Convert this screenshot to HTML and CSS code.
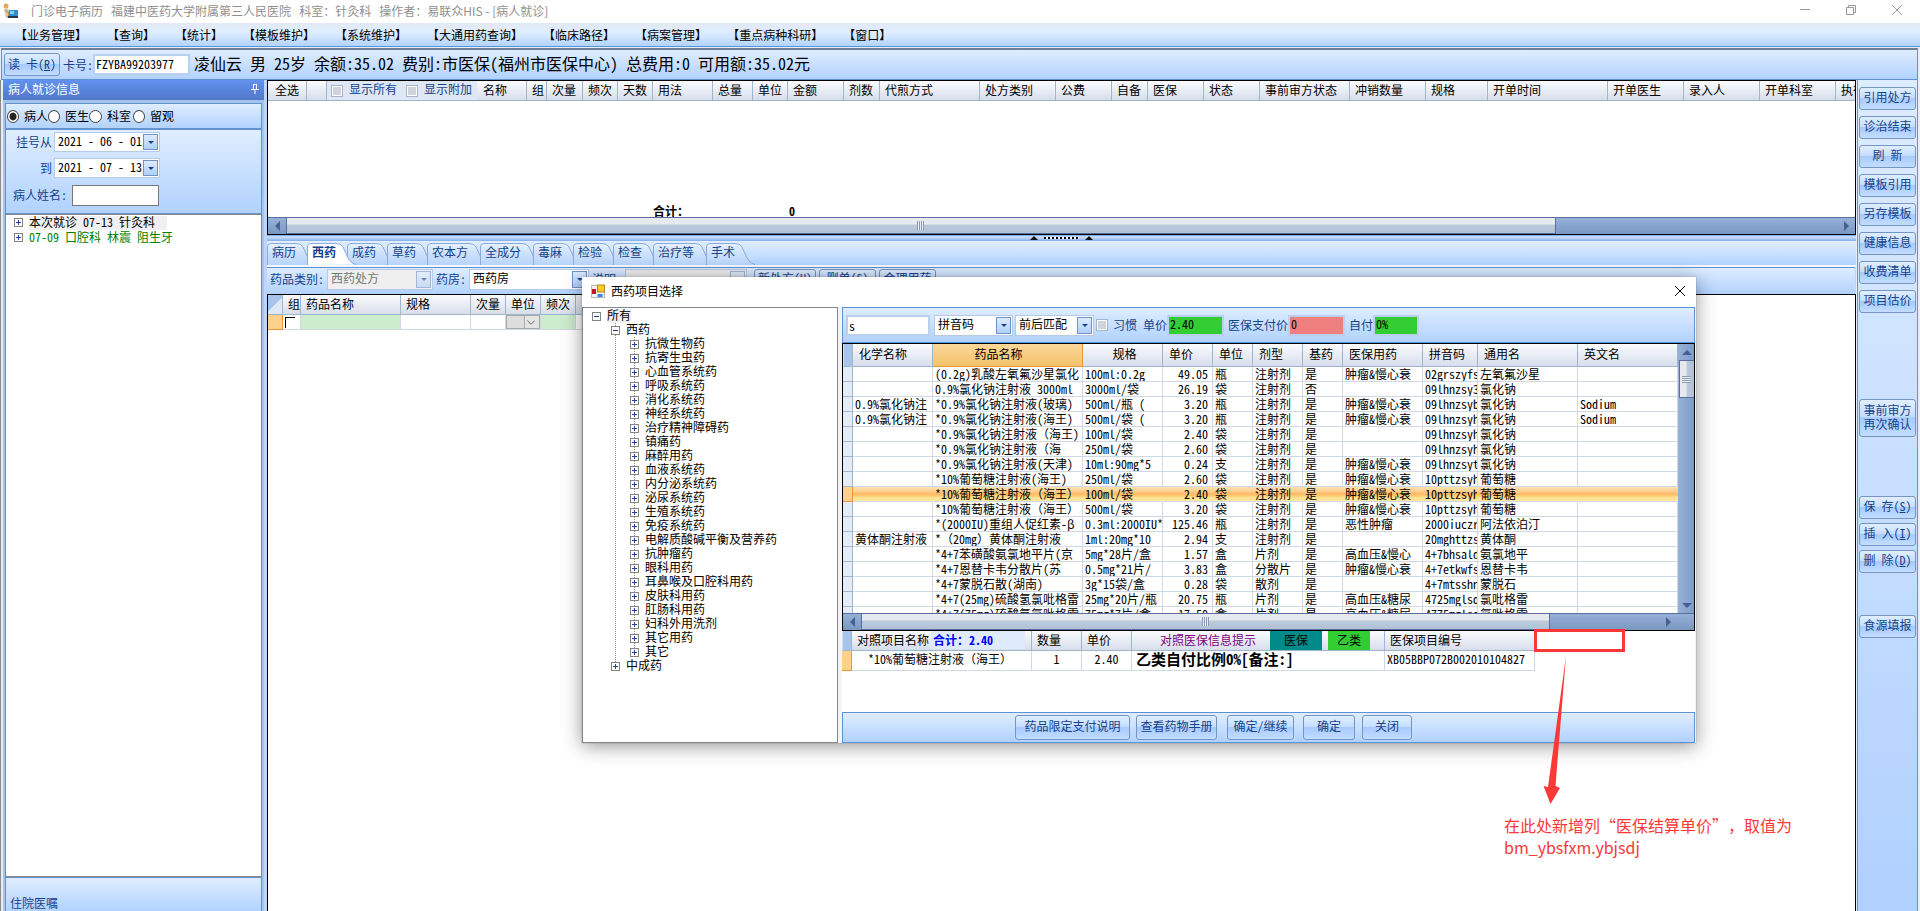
FILE: index.html
```html
<!DOCTYPE html>
<html lang="zh-CN">
<head>
<meta charset="utf-8">
<title>门诊电子病历</title>
<link rel="stylesheet" href="styles.css">
</head>
<body>
<svg class="defs" aria-hidden="true">
  <defs>
    <linearGradient id="tabfill" x1="0" y1="0" x2="0" y2="1"><stop offset="0" stop-color="#e6f1ff"/><stop offset="0.5" stop-color="#cbe0fb"/><stop offset="1" stop-color="#b9d5fb"/></linearGradient>
  </defs>
  <symbol id="tab2" viewBox="0 0 50 23"><path d="M.5 23V5Q.5 1.500 4 1.500H29Q34 1.500 36 5L41 16Q44 22 49 22.500"/></symbol>
  <symbol id="tab3" viewBox="0 0 63 23"><path d="M.5 23V5Q.5 1.500 4 1.500H42Q47 1.500 49 5L54 16Q57 22 62 22.500"/></symbol>
</svg>
<header class="titlebar">
  <svg class="app-icon" viewBox="0 0 16 16"><circle cx="4" cy="3" r="2.500" fill="#e8a95c"/><path d="M2 6q3-2 5 1l2 4-2 4H4z" fill="#d8c7a8"/><path d="M3 7l4 3-1 4" fill="none" stroke="#b98446"/><rect x="7" y="7" width="9" height="6" fill="#2d8fd0"/><rect x="8" y="8" width="4" height="3" fill="#7ed3f0"/><path d="M6 13h10v2H6z" fill="#26374f"/></svg>
  <h1>门诊电子病历&nbsp;&nbsp; 福建中医药大学附属第三人民医院&nbsp;&nbsp; 科室：针灸科&nbsp;&nbsp; 操作者：易联众HIS - [病人就诊]</h1>
  <div class="win-controls">
    <button aria-label="最小化"><svg viewBox="0 0 12 12"><path d="M1 5.500h10"/></svg></button>
    <button aria-label="还原"><svg viewBox="0 0 12 12"><path d="M1.500 3.500h7v7h-7zM3.500 3V1.500h7v7H9"/></svg></button>
    <button aria-label="关闭"><svg viewBox="0 0 12 12"><path d="M1 1l10 10M11 1L1 11"/></svg></button>
  </div>
</header>
<nav class="menubar">
  <a href="#">【业务管理】</a><a href="#">【查询】</a><a href="#">【统计】</a><a href="#">【模板维护】</a><a href="#">【系统维护】</a><a href="#">【大通用药查询】</a><a href="#">【临床路径】</a><a href="#">【病案管理】</a><a href="#">【重点病种科研】</a><a href="#">【窗口】</a>
</nav>
<section class="patientbar">
  <button class="btn read">读 卡(<u>R</u>)</button>
  <label for="card">卡号:</label>
  <input id="card" class="box card" value="FZYBA99203977">
  <p class="patient">凌仙云 男 25岁 余额:35.02 费别:市医保(福州市医保中心) 总费用:0 可用额:35.02元</p>
</section>
<main class="workspace">
  <aside class="left">
    <h2 class="left-head">病人就诊信息<svg class="pin" viewBox="0 0 8 10"><path d="M2.500 0v5M5.500 0v5M2 .5h4M0 5.500h8M4 6v4"/></svg></h2>
    <form class="left-body">
      <div class="radios">
        <label><input type="radio" name="kind" checked>病人</label>
        <label><input type="radio" name="kind">医生</label>
        <label class="dept"><input type="radio" name="kind">科室</label>
        <label><input type="radio" name="kind">留观</label>
      </div>
      <div class="filters">
        <label for="d1">挂号从</label>
        <span class="combo"><input id="d1" value="2021 - 06 - 01"><button type="button" class="drop" aria-label="选择日期"></button></span>
        <label for="d2">到</label>
        <span class="combo"><input id="d2" value="2021 - 07 - 13"><button type="button" class="drop" aria-label="选择日期"></button></span>
        <label for="pname" class="wide">病人姓名:</label>
        <input id="pname" class="name">
      </div>
    </form>
    <ul class="tree visits">
      <li><div class="node"><i class="plus"></i><span class="sel">本次就诊 07-13 针灸科</span></div></li>
      <li class="done"><div class="node"><i class="plus"></i><span>07-09 口腔科 林震 阻生牙</span></div></li>
    </ul>
    <footer class="left-foot">住院医嘱</footer>
  </aside>
  <section class="center">
    <div class="orders">
      <div class="head-wrap">
      <table class="grid orders-table">
        <colgroup><col class="w39"><col class="w20"><col class="w200"><col class="w20"><col class="w36"><col class="w35"><col class="w35"><col class="w60"><col class="w40"><col class="w35"><col class="w56"><col class="w36"><col class="w100"><col class="w76"><col class="w56"><col class="w36"><col class="w56"><col class="w56"><col class="w90"><col class="w76"><col class="w62"><col class="w120"><col class="w76"><col class="w76"><col class="w76"><col class="w76"></colgroup>
        <thead><tr><th>全选</th><th></th><th class="checks"><div><label><input type="checkbox">显示所有</label><label><input type="checkbox">显示附加</label><span>名称</span></div></th><th>组</th><th>次量</th><th>频次</th><th>天数</th><th>用法</th><th>总量</th><th>单位</th><th>金额</th><th>剂数</th><th>代煎方式</th><th>处方类别</th><th>公费</th><th>自备</th><th>医保</th><th>状态</th><th>事前审方状态</th><th>冲销数量</th><th>规格</th><th>开单时间</th><th>开单医生</th><th>录入人</th><th>开单科室</th><th>执行</th></tr></thead>
      </table>
      </div>
      <div class="sum"><b class="fw">合计：</b><b>0</b></div>
      <div class="hscroll"><i class="arr left-arr"></i><i class="thumb top-thumb"></i><i class="arr right-arr"></i></div>
    </div>
    <div class="splitter"><i class="tri"></i><i class="dots"></i><i class="tri"></i></div>
    <div class="tabs">
      <button class="tab two"><svg><use href="#tab2"/></svg><span>病历</span></button>
      <button class="tab two active"><svg><use href="#tab2"/></svg><span>西药</span></button>
      <button class="tab two"><svg><use href="#tab2"/></svg><span>成药</span></button>
      <button class="tab two"><svg><use href="#tab2"/></svg><span>草药</span></button>
      <button class="tab three"><svg><use href="#tab3"/></svg><span>农本方</span></button>
      <button class="tab three"><svg><use href="#tab3"/></svg><span>全成分</span></button>
      <button class="tab two"><svg><use href="#tab2"/></svg><span>毒麻</span></button>
      <button class="tab two"><svg><use href="#tab2"/></svg><span>检验</span></button>
      <button class="tab two"><svg><use href="#tab2"/></svg><span>检查</span></button>
      <button class="tab three"><svg><use href="#tab3"/></svg><span>治疗等</span></button>
      <button class="tab two"><svg><use href="#tab2"/></svg><span>手术</span></button>
    </div>
    <div class="rxbar">
      <label for="cat">药品类别:</label>
      <span class="combo off"><select id="cat" disabled><option>西药处方</option></select><i class="drop"></i></span>
      <label for="store">药房:</label>
      <span class="combo store"><select id="store"><option>西药房</option></select><i class="drop"></i></span>
      <label for="note">说明</label>
      <span class="combo off note"><select id="note" disabled><option></option></select><i class="drop"></i></span>
      <button class="btn rx-btn">新处方(<u>U</u>)</button>
      <button class="btn rx-btn">删单(<u>S</u>)</button>
      <button class="btn rx-btn">合理用药</button>
    </div>
    <div class="rx">
      <table class="grid rx-table">
        <colgroup><col class="w15"><col class="w18"><col class="w100"><col class="w70"><col class="w35"><col class="w35"><col class="w35"><col class="w35"></colgroup>
        <thead><tr><th class="corner"></th><th>组</th><th>药品名称</th><th>规格</th><th>次量</th><th>单位</th><th>频次</th><th></th></tr></thead>
        <tbody><tr><td class="cur"></td><td><input type="checkbox" class="flat" aria-label="组"></td><td class="mint"></td><td></td><td></td><td class="unit"><span><svg viewBox="0 0 9 5"><path d="M.5.5l4 4 4-4"/></svg></span></td><td class="mint"></td><td></td></tr></tbody>
      </table>
    </div>
  </section>
  <aside class="right">
    <div class="group g1"><button class="btn">引用处方</button><button class="btn">诊治结束</button><button class="btn">刷 新</button><button class="btn">模板引用</button><button class="btn">另存模板</button><button class="btn">健康信息</button><button class="btn">收费清单</button><button class="btn">项目估价</button></div>
    <div class="group g2"><button class="btn tall">事前审方<br>再次确认</button></div>
    <div class="group g3"><button class="btn">保 存(<u>S</u>)</button><button class="btn">插 入(<u>I</u>)</button><button class="btn">删 除(<u>D</u>)</button></div>
    <div class="group g4"><button class="btn">食源填报</button></div>
  </aside>
</main>

<section class="dialog" role="dialog" aria-labelledby="dlg-title">
  <header class="dlg-head">
    <svg class="dlg-icon" viewBox="0 0 15 15"><rect x=".5" y="1.500" width="13" height="12" fill="#f2f2f2" stroke="#b9b9b9"/><rect x="1" y="5" width="4" height="5" fill="#c01c1c"/><rect x="6.500" y="1" width="7" height="7" fill="#f7c92c" stroke="#b98b10"/><rect x="6.500" y="10" width="5" height="3" fill="#3f87f0"/></svg>
    <h2 id="dlg-title">西药项目选择</h2>
    <button class="close" aria-label="关闭"><svg viewBox="0 0 12 12"><path d="M1 1l10 10M11 1L1 11"/></svg></button>
  </header>
  <div class="dlg-body">
    <div class="tree-pane">
      <ul class="tree">
        <li><div class="node"><i class="plus minus"></i><span class="sel">所有</span></div>
          <ul>
            <li><div class="node"><i class="plus minus"></i><span>西药</span></div>
              <ul>
                <li><div class="node"><i class="plus"></i><span>抗微生物药</span></div></li>
                <li><div class="node"><i class="plus"></i><span>抗寄生虫药</span></div></li>
                <li><div class="node"><i class="plus"></i><span>心血管系统药</span></div></li>
                <li><div class="node"><i class="plus"></i><span>呼吸系统药</span></div></li>
                <li><div class="node"><i class="plus"></i><span>消化系统药</span></div></li>
                <li><div class="node"><i class="plus"></i><span>神经系统药</span></div></li>
                <li><div class="node"><i class="plus"></i><span>治疗精神障碍药</span></div></li>
                <li><div class="node"><i class="plus"></i><span>镇痛药</span></div></li>
                <li><div class="node"><i class="plus"></i><span>麻醉用药</span></div></li>
                <li><div class="node"><i class="plus"></i><span>血液系统药</span></div></li>
                <li><div class="node"><i class="plus"></i><span>内分泌系统药</span></div></li>
                <li><div class="node"><i class="plus"></i><span>泌尿系统药</span></div></li>
                <li><div class="node"><i class="plus"></i><span>生殖系统药</span></div></li>
                <li><div class="node"><i class="plus"></i><span>免疫系统药</span></div></li>
                <li><div class="node"><i class="plus"></i><span>电解质酸碱平衡及营养药</span></div></li>
                <li><div class="node"><i class="plus"></i><span>抗肿瘤药</span></div></li>
                <li><div class="node"><i class="plus"></i><span>眼科用药</span></div></li>
                <li><div class="node"><i class="plus"></i><span>耳鼻喉及口腔科用药</span></div></li>
                <li><div class="node"><i class="plus"></i><span>皮肤科用药</span></div></li>
                <li><div class="node"><i class="plus"></i><span>肛肠科用药</span></div></li>
                <li><div class="node"><i class="plus"></i><span>妇科外用洗剂</span></div></li>
                <li><div class="node"><i class="plus"></i><span>其它用药</span></div></li>
                <li><div class="node"><i class="plus"></i><span>其它</span></div></li>
              </ul>
            </li>
            <li><div class="node"><i class="plus"></i><span>中成药</span></div></li>
          </ul>
        </li>
      </ul>
    </div>
    <div class="pick">
      <div class="search">
        <input class="box key" value="s" aria-label="检索">
        <span class="combo"><select aria-label="码"><option>拼音码</option></select><i class="drop"></i></span>
        <span class="combo"><select aria-label="匹配"><option>前后匹配</option></select><i class="drop"></i></span>
        <label class="habit"><input type="checkbox">习惯</label>
        <label for="p1">单价</label><input id="p1" class="box val green" value="2.40">
        <label for="p2" class="gap">医保支付价</label><input id="p2" class="box val pink" value="0">
        <label for="p3" class="gap">自付</label><input id="p3" class="box val green short" value="0%">
      </div>
      <div class="drugs">
        <div class="drugs-view">
        <table class="grid drug-table">
          <colgroup><col class="w10"><col class="w80"><col class="w150"><col class="w80"><col class="w50"><col class="w40"><col class="w50"><col class="w40"><col class="w80"><col class="w55"><col class="w100"><col class="w100"></colgroup>
          <thead><tr><th class="corner bar"></th><th>化学名称</th><th class="sorted">药品名称</th><th class="mid">规格</th><th>单价</th><th>单位</th><th>剂型</th><th>基药</th><th>医保用药</th><th>拼音码</th><th>通用名</th><th>英文名</th></tr></thead>
          <tbody>
          <tr><td></td><td></td><td>(0.2g)乳酸左氧氟沙星氯化</td><td>100ml:0.2g</td><td>49.05</td><td>瓶</td><td>注射剂</td><td>是</td><td>肿瘤&amp;慢心衰</td><td>02grszyfs</td><td>左氧氟沙星</td><td></td></tr>
          <tr><td></td><td></td><td>0.9%氯化钠注射液 3000ml</td><td>3000ml/袋</td><td>26.19</td><td>袋</td><td>注射剂</td><td>否</td><td></td><td>09lhnzsy3</td><td>氯化钠</td><td></td></tr>
          <tr><td></td><td>0.9%氯化钠注</td><td>*0.9%氯化钠注射液(玻璃)</td><td>500ml/瓶 (</td><td>3.20</td><td>瓶</td><td>注射剂</td><td>是</td><td>肿瘤&amp;慢心衰</td><td>09lhnzsyb</td><td>氯化钠</td><td>Sodium</td></tr>
          <tr><td></td><td>0.9%氯化钠注</td><td>*0.9%氯化钠注射液(海王)</td><td>500ml/袋 (</td><td>3.20</td><td>瓶</td><td>注射剂</td><td>是</td><td>肿瘤&amp;慢心衰</td><td>09lhnzsyh</td><td>氯化钠</td><td>Sodium</td></tr>
          <tr><td></td><td></td><td>*0.9%氯化钠注射液<span class="fw">（</span>海王)</td><td>100ml/袋</td><td>2.40</td><td>袋</td><td>注射剂</td><td>是</td><td></td><td>09lhnzsyh</td><td>氯化钠</td><td></td></tr>
          <tr><td></td><td></td><td>*0.9%氯化钠注射液<span class="fw">（</span>海</td><td>250ml/袋</td><td>2.60</td><td>袋</td><td>注射剂</td><td>是</td><td></td><td>09lhnzsyh</td><td>氯化钠</td><td></td></tr>
          <tr><td></td><td></td><td>*0.9%氯化钠注射液(天津)</td><td>10ml:90mg*5</td><td>0.24</td><td>支</td><td>注射剂</td><td>是</td><td>肿瘤&amp;慢心衰</td><td>09lhnzsyt</td><td>氯化钠</td><td></td></tr>
          <tr><td></td><td></td><td>*10%葡萄糖注射液(海王)</td><td>250ml/袋</td><td>2.60</td><td>袋</td><td>注射剂</td><td>是</td><td>肿瘤&amp;慢心衰</td><td>10pttzsyh</td><td>葡萄糖</td><td></td></tr>
          <tr class="picked"><td></td><td></td><td>*10%葡萄糖注射液<span class="fw">（海王）</span></td><td>100ml/袋</td><td>2.40</td><td>袋</td><td>注射剂</td><td>是</td><td>肿瘤&amp;慢心衰</td><td>10pttzsyh</td><td>葡萄糖</td><td></td></tr>
          <tr><td></td><td></td><td>*10%葡萄糖注射液<span class="fw">（海王）</span></td><td>500ml/袋</td><td>3.20</td><td>袋</td><td>注射剂</td><td>是</td><td>肿瘤&amp;慢心衰</td><td>10pttzsyh</td><td>葡萄糖</td><td></td></tr>
          <tr><td></td><td></td><td>*(2000IU)重组人促红素-β</td><td>0.3ml:2000IU*</td><td>125.46</td><td>瓶</td><td>注射剂</td><td>是</td><td>恶性肿瘤</td><td>2000iuczr</td><td>阿法依泊汀</td><td></td></tr>
          <tr><td></td><td>黄体酮注射液</td><td>*<span class="fw">（</span>20mg<span class="fw">）</span>黄体酮注射液</td><td>1ml:20mg*10</td><td>2.94</td><td>支</td><td>注射剂</td><td>是</td><td></td><td>20mghttzs</td><td>黄体酮</td><td></td></tr>
          <tr><td></td><td></td><td>*4+7苯磺酸氨氯地平片(京</td><td>5mg*28片/盒</td><td>1.57</td><td>盒</td><td>片剂</td><td>是</td><td>高血压&amp;慢心</td><td>4+7bhsald</td><td>氨氯地平</td><td></td></tr>
          <tr><td></td><td></td><td>*4+7恩替卡韦分散片(苏</td><td>0.5mg*21片/</td><td>3.83</td><td>盒</td><td>分散片</td><td>是</td><td>肿瘤&amp;慢心衰</td><td>4+7etkwfs</td><td>恩替卡韦</td><td></td></tr>
          <tr><td></td><td></td><td>*4+7蒙脱石散(湖南)</td><td>3g*15袋/盒</td><td>0.28</td><td>袋</td><td>散剂</td><td>是</td><td></td><td>4+7mtsshn</td><td>蒙脱石</td><td></td></tr>
          <tr><td></td><td></td><td>*4+7(25mg)硫酸氢氯吡格雷</td><td>25mg*20片/瓶</td><td>20.75</td><td>瓶</td><td>片剂</td><td>是</td><td>高血压&amp;糖尿</td><td>4725mglsq</td><td>氯吡格雷</td><td></td></tr>
          <tr><td></td><td></td><td>*4+7(75mg)硫酸氢氯吡格雷</td><td>75mg*7片/盒</td><td>17.50</td><td>盒</td><td>片剂</td><td>是</td><td>高血压&amp;糖尿</td><td>4775mglsq</td><td>氯吡格雷</td><td></td></tr>
          </tbody>
        </table>
        <div class="vscroll"><i class="arr up"></i><i class="vthumb"></i><i class="arr down"></i></div>
        </div>
        <div class="hscroll"><i class="arr left-arr"></i><i class="thumb low-thumb"></i><i class="arr right-arr"></i><i class="nook"></i></div>
      </div>
      <div class="match">
        <table class="grid match-table">
          <colgroup><col class="w10"><col class="w180"><col class="w50"><col class="w50"><col class="w253"><col class="w150"></colgroup>
          <thead><tr><th class="corner bar"></th><th><div class="th-row">对照项目名称<b class="total fw">合计：<span class="hw">2.40</span></b></div></th><th>数量</th><th>单价</th><th class="tips"><div class="th-row"><span class="tip">对照医保信息提示</span><span class="tag teal">医保</span><span class="tag lime">乙类</span></div></th><th>医保项目编号</th></tr></thead>
          <tbody><tr><td class="cur"></td><td class="indent">*10%葡萄糖注射液<span class="fw">（海王）</span></td><td class="c">1</td><td class="c">2.40</td><td class="big">乙类自付比例0%[备注:]</td><td>XB05BBP072B002010104827</td></tr></tbody>
        </table>
      </div>
      <footer class="actions"><button class="btn a1">药品限定支付说明</button><button class="btn a2">查看药物手册</button><button class="btn a3">确定/继续</button><button class="btn a4">确定</button><button class="btn a5">关闭</button></footer>
    </div>
  </div>
</section>

<div class="callout-box"></div>
<svg class="callout-arrow" viewBox="0 0 30 150"><path d="M24 2L13.500 132L18 134L8.500 150L1.500 132L6 133Z" fill="#fb3838"/></svg>
<p class="callout-text">在此处新增列“医保结算单价”，取值为<br>bm_ybsfxm.ybjsdj</p>
</body>
</html>
```

FILE: styles.css
```css
* { box-sizing: border-box; }
html, body { height: 100%; }
body {
  margin: 0; display: flex; flex-direction: column; position: relative; overflow: hidden;
  background: #e4effd; color: #000;
  font: 12px/14px "Noto Sans CJK SC", sans-serif; font-feature-settings: "hwid";
  text-spacing-trim: space-all;
  white-space: nowrap;
}
h1, h2, p, ul { margin: 0; padding: 0; font-size: 12px; font-weight: normal; }
ul { list-style: none; }
button, input, select { font: inherit; font-feature-settings: inherit; color: inherit; margin: 0; padding: 0; border-radius: 0; }
button { background: none; border: 0; }
a { color: inherit; text-decoration: none; }
i { font-style: normal; display: block; flex: none; }
.defs { position: absolute; width: 0; height: 0; }
.fw { font-feature-settings: normal; }
.hw { font-feature-settings: "hwid"; }

.titlebar { flex: none; display: flex; align-items: center; height: 23px; padding: 0 0 2px 2px; background: #fff; color: #8f8f8f; }
.titlebar h1 { flex: 1; margin-left: 13px; font-feature-settings: normal; }
.app-icon { width: 16px; height: 16px; }
.win-controls { display: flex; }
.win-controls button { width: 46px; height: 20px; }
.win-controls svg { width: 12px; height: 12px; fill: none; stroke: #999; }

.menubar {
  flex: none; display: flex; align-items: center; height: 24px; padding-left: 5px;
  background: linear-gradient(#e3e9f6, #deedff 40%, #d3e6ff 60%, #b0d3ff); border-bottom: 1px solid #5f92d2;
}
.menubar a { padding: 0 10px; line-height: 20px; }

.patientbar {
  flex: none; display: flex; align-items: center; height: 32px; margin: 1px 2px 0 1px; padding: 0 2px;
  background: linear-gradient(#dfedff, #b1d2ff); border: 1px solid #5f92d2; border-top: 2px solid #6e7f96;
  color: #15428b;
}
.btn {
  height: 23px; padding-bottom: 2px; border: 1px solid #7695c5; border-radius: 3px; color: #15428b;
  background: linear-gradient(#e0eeff, #c6dfff 45%, #a7caff 50%, #c3ddff);
}
.btn.read { width: 56px; margin-right: 3px; }
.box { border: 2px solid #b9d0ee; background: #fff; color: #000; height: 21px; padding: 0 0 2px 1px; }
.card { width: 97px; }
.patient { margin-left: 4px; padding-bottom: 4px; font-size: 16px; line-height: 20px; color: #000; }

.workspace { flex: 1; min-height: 0; display: flex; padding-left: 2px; border-left: 1px solid #8a8a8a; }
.left { width: 261px; flex: none; display: flex; flex-direction: column; background: #a4c4f0; }
.left-head {
  display: flex; align-items: center; justify-content: space-between; height: 20px; padding: 0 5px 2px;
  background: linear-gradient(#6291f0, #5178c9); color: #fff;
}
.pin { width: 8px; height: 10px; fill: none; stroke: #fff; }
.left-body { margin: 3px 2px 0; }
.radios {
  display: flex; align-items: center; height: 26px; padding-left: 1px;
  background: linear-gradient(#dfedff, #b1d2ff); border: 1px solid #6593cf;
}
.radios label { display: flex; align-items: center; gap: 5px; width: 41px; }
.radios .dept { width: 44px; }
.radios input {
  appearance: none; width: 13px; height: 13px; border: 1px solid #444; border-radius: 50%; background: #fff;
}
.radios input:checked { background: radial-gradient(#222 0 3px, #fff 4px); }
.filters {
  display: grid; grid-template-columns: 46px 1fr; column-gap: 2px; row-gap: 6px; align-items: center; justify-items: start;
  height: 85px; padding: 2px 0 7px; color: #15428b;
  background: linear-gradient(#dfedff, #b1d2ff); border: 1px solid #6593cf;
}
.filters label { justify-self: end; }
.filters .wide { width: 58px; justify-self: start; padding-left: 7px; }
.name { width: 87px; height: 21px; margin-left: 18px; border: 1px solid #777; background: #fff; }
.combo { display: flex; width: 106px; height: 20px; border: 1px solid #b3cbe9; background: #fff; color: #000; padding: 1px; }
.combo input, .combo select { flex: 1; min-width: 0; border: 0; background: none; appearance: none; padding: 0 0 2px 2px; opacity: 1; }
.drop {
  width: 15px; border: 1px solid #6f93c8; background: linear-gradient(#dcebff, #b0cffa);
  display: flex; flex: none; align-items: center; justify-content: center;
}
.drop::after { content: ""; border: 3px solid transparent; border-top-color: #15428b; border-bottom: 0; }
.visits { flex: 1; margin: 0 2px; padding: 0 0 0 8px; background: #fff; border: 1px solid #888; }
.visits .node { height: 15px; }
.done { color: #008000; }
.left-foot {
  height: 34px; margin: 0 2px; padding: 18px 0 0 4px; color: #15428b;
  background: linear-gradient(#dfedff, #b1d2ff); border: 1px solid #6593cf; border-bottom: 0;
}

.node { display: flex; align-items: center; height: 14px; gap: 6px; }
.node span { line-height: 12px; padding-bottom: 2px; }
.plus { position: relative; width: 9px; height: 9px; border: 1px solid #848484; background: #fff; }
.plus::before { content: ""; position: absolute; inset: 3px 1px; background: #22449c; }
.plus::after { content: ""; position: absolute; inset: 1px 3px; background: #22449c; }
.plus.minus::after { display: none; }
.sel { background: #f0f0f0; }
.visits .sel { padding-right: 12px; }

.center { flex: 1; min-width: 0; display: flex; flex-direction: column; padding-left: 3px; background: #bdd5f8; }
.orders { border: 1px solid #000; background: #fff; height: 155px; display: flex; flex-direction: column; flex: none; }
.head-wrap { overflow: hidden; }
.grid { table-layout: fixed; border-collapse: separate; border-spacing: 0; width: 0; }
.grid th {
  height: 20px; padding: 0 0 1px 5px; text-align: left; font-weight: normal; overflow: hidden;
  border-right: 1px solid #9eb6ce; border-bottom: 1px solid #9eb6ce; background: linear-gradient(#fafbfd, #d7deeb);
}
.orders-table th:first-child { padding-left: 7px; }
.grid th.checks { padding: 0; }
.checks div { display: flex; align-items: center; height: 19px; }
.checks label { display: flex; align-items: center; gap: 6px; width: 75px; height: 19px; padding: 0 0 3px 4px; background: #dfe7f5; color: #15428b; }
.checks span { padding: 0 0 1px 6px; }
.checks input, .habit input {
  appearance: none; width: 12px; height: 12px; border: 1px solid #a3b4cd; background: #cfd4dc; box-shadow: inset 0 0 0 1px #fff;
}
.checks input { margin-top: 3px; }
.sum { flex: 1; display: flex; align-items: flex-end; gap: 100px; padding-left: 385px; overflow: hidden; line-height: 12px; }
.hscroll {
  flex: none; display: flex; align-items: center; height: 17px; border-top: 1px solid #5c6f9c;
  background: linear-gradient(#96b1d8, #7998c0);
}
.arr { width: 18px; height: 16px; display: flex; align-items: center; justify-content: center; }
.arr::after { content: ""; border: 5px solid transparent; }
.left-arr::after { border-right-color: #47608f; border-left: 0; }
.right-arr::after { border-left-color: #47608f; border-right: 0; }
.up::after { border-bottom-color: #47608f; border-top: 0; }
.down::after { border-top-color: #47608f; border-bottom: 0; }
.thumb {
  height: 16px; border: 1px solid #5c6f9c; border-top: 0;
  background: repeating-linear-gradient(90deg, #8f9bb0 0 1px, #e8edf4 1px 2px) center / 7px 9px no-repeat, linear-gradient(#e6e9ee 0 6px, #bccadb 7px, #b1c2d6);
}
.hscroll .right-arr { margin-left: auto; }
.top-thumb { width: 80%; }
.splitter {
  flex: none; display: flex; align-items: center; justify-content: center; gap: 6px; height: 6px;
  background: linear-gradient(#6d9ee2, #cfe1fb 30%, #84aee9);
}
.splitter .tri { border: 4px solid transparent; border-top: 0; border-bottom: 4px solid #111; }
.splitter .dots { width: 35px; height: 2px; background: repeating-linear-gradient(90deg, #000 0 2px, #fff 2px 4px); }

.tabs {
  flex: none; display: flex; align-items: flex-end; height: 26px; background: linear-gradient(#e0eeff, #b3d3ff);
  border-bottom: 2px solid #f4f9ff; isolation: isolate;
}
.tab { position: relative; height: 22px; padding: 0 0 4px 5px; text-align: left; color: #15428b; }
.tab.two { width: 40px; }
.tab.three { width: 53px; }
.tab svg { position: absolute; left: 0; bottom: 0; z-index: -1; width: 50px; height: 23px; fill: url(#tabfill); stroke: #8eabdb; }
.tab.three svg { width: 63px; }
.tab.active { font-weight: bold; }
.tab.active svg { fill: #fff; z-index: 0; }
.tab span { position: relative; z-index: 1; }

.rxbar {
  flex: none; display: flex; align-items: center; gap: 3px; height: 27px; padding: 0 3px 4px; color: #15428b;
  background: linear-gradient(#dfedff, #b1d2ff); border-top: 1px solid #5f92d2; margin-right: 1px;
}
.rxbar .off { background: #efefef; color: #777; }
.off .drop { opacity: .6; }
.rxbar .combo { height: 21px; }
.rxbar .store { width: 120px; }
.rxbar .note { width: 122px; margin: 0 4px 0 6px; }
.rx-btn { padding: 0 3px 5px; min-width: 57px; align-self: flex-start; margin-top: 1px; }
.rx { flex: 1; background: #fff; border: 1px solid #000; border-bottom: 0; }
.grid td {
  height: 15px; padding: 0 0 0 2px; overflow: hidden; line-height: 14px; white-space: pre;
  border-right: 1px solid #d0d7e5; border-bottom: 1px solid #d0d7e5; background: #fff;
}
.grid .corner { background: linear-gradient(135deg, #a9c4e9 50%, #dfe8f5 50%); padding: 0; }
.grid .bar { background: #a8c4ea; border-left: 1px solid #cfe0f5; }
.grid .cur { background: #ffd18a; border-right-color: #f29436; border-bottom-color: #f29436; }
.grid .mint { background: #cdebcd; }
.flat { appearance: none; display: block; width: 10px; height: 11px; border-top: 1px solid #000; border-left: 1px solid #000; }
.grid .unit { padding: 0; }
.unit span { display: flex; align-items: center; justify-content: flex-end; height: 14px; padding-right: 4px; border: 1px solid #aaa; background: linear-gradient(90deg, #ddd 17px, #aaa 17px 18px, #e4e4e4 18px); }
.unit svg { width: 8px; height: 5px; fill: none; stroke: #555; }

.right {
  flex: none; width: 61px; margin: 0 2px 0 1px; padding: 7px 1px 0; display: flex; flex-direction: column;
  background: linear-gradient(#deecff, #b0d0ff); border-left: 1px solid #6593cf; border-right: 1px solid #6593cf;
}
.group { display: flex; flex-direction: column; gap: 6px; }
.group .btn { width: 100%; flex: none; padding-bottom: 3px; }
.g2 { margin-top: 86px; }
.g3 { margin-top: 59px; gap: 4px; }
.g4 { margin-top: 42px; }
.group .tall { height: 38px; line-height: 14px; }

.dialog {
  position: absolute; left: 582px; right: 224px; top: 277px; height: 466px; display: flex; flex-direction: column;
  background: #f4f4f4; box-shadow: 0 3px 18px rgba(0,0,0,.42), 0 0 1px rgba(0,0,0,.4);
}
.dlg-head { flex: none; display: flex; align-items: center; height: 30px; padding: 0 10px 2px 9px; background: #fff; }
.dlg-head h2 { flex: 1; margin-left: 5px; }
.dlg-icon { width: 15px; height: 15px; }
.close { width: 12px; height: 12px; }
.close svg { display: block; width: 12px; height: 12px; fill: none; stroke: #000; }
.dlg-body { flex: 1; min-height: 0; display: flex; gap: 4px; padding-right: 1px; }
.tree-pane { flex: none; width: 256px; padding: 1px 0 0 9px; background: #fff; border: 1px solid #828790; }
.tree ul { margin-left: 19px; background: repeating-linear-gradient(#909090 0 1px, #fff 1px 2px) 4px 0 / 1px calc(100% - 7px) no-repeat; }
.pick { flex: 1; min-width: 0; display: flex; flex-direction: column; background: #fff; }
.search {
  flex: none; display: flex; align-items: center; height: 36px; padding: 0 3px 0; color: #15428b;
  background: linear-gradient(#dfedff, #b1d2ff); border: 1px solid #5f92d2;
}
.search .combo { width: 79px; height: 21px; margin-right: 2px; }
.search .key { width: 84px; margin-right: 4px; padding-bottom: 0; }
.habit { display: flex; align-items: center; gap: 5px; margin-right: 6px; }
.gap { margin-left: 4px; }
.val { width: 57px; padding-bottom: 4px; }
.green { background: #32cd32; }
.pink { background: #f08080; }
.short { width: 46px; }
.drugs { flex: none; height: 288px; display: flex; flex-direction: column; border: 1px solid #000; overflow: hidden; }
.drugs-view { flex: 1; min-height: 0; display: flex; overflow: hidden; justify-content: space-between; }
.drug-table { flex: none; align-self: flex-start; }
.drug-table th { height: 23px; padding: 0 0 2px 6px; }
.drug-table .sorted { text-align: center; padding-right: 24px; background: linear-gradient(#fbd79a, #f3c26a); border-color: #f29436; }
.drug-table .mid { text-align: center; padding-left: 4px; }
.drug-table td:first-child { background: #e4ecf7; border-color: #9eb6ce; }
.drug-table td:nth-child(5) { text-align: right; padding-right: 4px; }
.picked td { background: linear-gradient(#ffe3b0, #fdcb8c 35%, #ffb760 50%, #ffe08e 75%, #ffe9a0); border-right-color: transparent; }
.drug-table .picked td:first-child { background: #ffd18a; border-color: #f29436; }
.vscroll { flex: none; width: 17px; display: flex; flex-direction: column; align-items: center; background: linear-gradient(90deg, #97b2d9, #7c9bc5); }
.vthumb {
  width: 16px; height: 38px; border: 1px solid #5c6f9c;
  background: repeating-linear-gradient(#8f9bb0 0 1px, #e8edf4 1px 2px) center / 9px 7px no-repeat, linear-gradient(90deg, #e6e9ee 0 6px, #bccadb 7px, #b1c2d6);
}
.down { margin-top: auto; }
.low-thumb { width: 81%; }
.nook { width: 17px; }
.match { flex: 1; min-height: 0; }
.match-table td { height: 20px; line-height: 14px; padding-bottom: 4px; }
.match-table td.indent { padding-left: 16px; }
.match-table td.c { text-align: center; padding-left: 0; }
.match-table td.big { font-size: 15px; font-weight: bold; line-height: 16px; padding: 0 0 3px 4px; }
.th-row { display: flex; align-items: center; height: 18px; }
.total { width: 94px; margin-left: 2px; padding-left: 2px; line-height: 18px; background: #dfebfb; color: #00f; }
.tip { width: 110px; margin-left: 23px; color: #800080; }
.tag { line-height: 17px; height: 19px; text-align: center; }
.teal { width: 52px; margin-right: 6px; background: #008b8b; }
.lime { width: 42px; background: #32cd32; }
.actions {
  flex: none; display: flex; align-items: flex-start; height: 31px; padding: 2px 0 0 172px;
  background: linear-gradient(#dfedff, #b1d2ff); border: 1px solid #5f92d2;
}
.actions .btn { height: 25px; padding-bottom: 3px; }
.a1 { width: 115px; margin-right: 6px; }
.a2 { width: 81px; margin-right: 10px; }
.a3 { width: 67px; margin-right: 9px; }
.a4 { width: 52px; margin-right: 7px; }
.a5 { width: 50px; }

.callout-box { position: absolute; left: 1534px; top: 629px; width: 91px; height: 23px; border: 3px solid #fb3838; background: #fff; }
.callout-arrow { position: absolute; left: 1542px; top: 654px; width: 30px; height: 150px; }
.callout-text { position: absolute; left: 1504px; top: 814px; color: #fb3838; font-size: 16px; line-height: 22px; font-feature-settings: normal; }

.w10 { width: 10px; } .w15 { width: 15px; } .w18 { width: 18px; } .w20 { width: 20px; }
.w35 { width: 35px; } .w36 { width: 36px; } .w39 { width: 39px; } .w40 { width: 40px; }
.w50 { width: 50px; } .w55 { width: 55px; } .w56 { width: 56px; } .w60 { width: 60px; }
.w62 { width: 62px; } .w70 { width: 70px; } .w76 { width: 76px; } .w80 { width: 80px; }
.w90 { width: 90px; } .w100 { width: 100px; } .w120 { width: 120px; } .w150 { width: 150px; }
.w180 { width: 180px; } .w200 { width: 200px; } .w253 { width: 253px; }
```
